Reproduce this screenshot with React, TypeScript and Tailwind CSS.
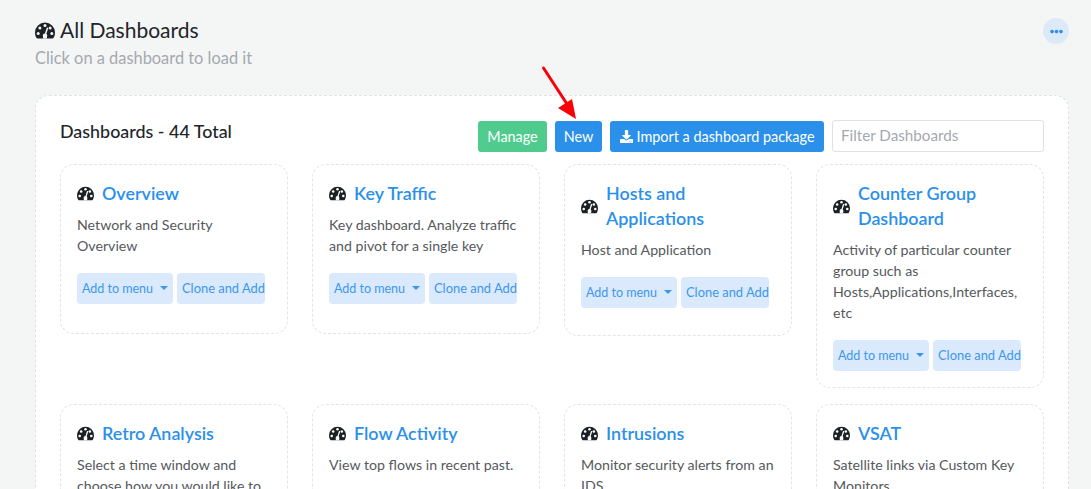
import React from "react";
import { FaDownload, FaEllipsisH } from "react-icons/fa";

function Gauge({ className, hole }: { className: string; hole: string }) {
  return (
    <svg className={className} viewBox="0 0 20 17" aria-hidden="true">
      <path
        d="M10 .5A10 10 0 0 0 0 10.5c0 2.200.6 4 1.400 5.300.300.500.700.700 1.200.700h14.800c.500 0 .900-.200 1.200-.700.800-1.300 1.400-3.100 1.400-5.300A10 10 0 0 0 10 .5z"
        fill="#1d2125"
      />
      <g fill={hole}>
        <circle cx="10" cy="3.600" r="1.500" />
        <circle cx="4.900" cy="6.100" r="1.500" />
        <circle cx="15.100" cy="6.100" r="1.500" />
        <circle cx="3.200" cy="11.400" r="1.500" />
        <circle cx="16.800" cy="11.400" r="1.500" />
        <circle cx="10" cy="13.600" r="2.200" />
        <rect x="8" y="14" width="4" height="2.500" />
      </g>
      <line x1="10.200" y1="13" x2="12.400" y2="6.200" stroke={hole} strokeWidth="1.500" strokeLinecap="round" />
    </svg>
  );
}

const cards = [
  { t: "Overview", d: "Network and Security Overview", pb: "pb-[29px]" },
  { t: "Key Traffic", d: "Key dashboard. Analyze traffic and pivot for a single key", pb: "pb-[29px]" },
  { t: "Hosts and Applications", d: "Host and Application", pb: "pb-[27px]" },
  { t: "Counter Group Dashboard", d: "Activity of particular counter group such as Hosts,Applications,Interfaces, etc", pb: "pb-[16px]" },
  { t: "Retro Analysis", d: "Select a time window and choose how you would like to analyze", pb: "pb-[29px]" },
  { t: "Flow Activity", d: "View top flows in recent past.", pb: "pb-[29px]" },
  { t: "Intrusions", d: "Monitor security alerts from an IDS", pb: "pb-[29px]" },
  { t: "VSAT", d: "Satellite links via Custom Key Monitors", pb: "pb-[29px]" },
];

function Card({ t, d, pb }: { t: string; d: string; pb: string }) {
  return (
    <div className={"self-start rounded-[14px] border border-dashed border-[#e2e4e6] bg-white pl-4 pr-[16px] pt-[16px] " + pb}>
      <div className="flex items-center gap-[8px]">
        <Gauge className="w-[17px] h-[15px] shrink-0" hole="#ffffff" />
        <h3 className="text-[17.9px] leading-[25px] font-semibold text-[#2b90ea]">{t}</h3>
      </div>
      <p className="mt-[8px] text-[14.2px] leading-[21px] text-[#55595d]">{d}</p>
      <div className="mt-[17px] flex gap-[4px] whitespace-nowrap">
        <button className="h-[31px] w-[96px] flex items-center justify-center rounded-[4px] bg-[#dbe9fd] pt-[2px] text-[12.5px] text-[#3a98ec]">
          Add to menu
          <span className="ml-[7px] mb-[4px] border-x-[4.5px] border-t-[4.5px] border-x-transparent border-t-[#3a98ec]" />
        </button>
        <button className="h-[31px] w-[88px] flex items-center rounded-[4px] bg-[#dbe9fd] pl-[5px] pt-[1px] text-[12.9px] text-[#3a98ec]">
          Clone and Add
        </button>
      </div>
    </div>
  );
}

export default function App() {
  return (
    <div
      className="relative h-[489px] overflow-hidden bg-[#f4f6f6] pl-[35px] pr-[22px] pt-[17px]"
      style={{ fontFamily: 'Lato, "Open Sans", sans-serif' }}
    >
      <div className="flex justify-between">
        <div>
          <h1 className="flex items-center gap-[5px] text-[21px] leading-[26px] text-[#212529]">
            <Gauge className="w-[20px] h-[17px]" hole="#f4f6f6" />
            All Dashboards
          </h1>
          <p className="mt-[3px] text-[16.4px] leading-[23px] text-[#a4a9ae]">Click on a dashboard to load it</p>
        </div>
        <div className="mt-[1px] flex h-[26px] w-[26px] items-center justify-center rounded-full bg-[#dbe9f8]">
          <FaEllipsisH className="h-[13px] w-[13px] text-[#2b90ea]" />
        </div>
      </div>
      <div className="mt-[26px] rounded-[14px] border border-dashed border-[#dfe1e3] bg-white pl-[24px] pr-[24px] pt-[24px]">
        <div className="flex items-start justify-between">
          <h2 className="-mt-[1px] text-[17.9px] leading-[24px] font-medium text-[#212529]">Dashboards - 44 Total</h2>
          <div className="flex gap-[8px] text-[14.4px] text-white">
            <button className="mt-[1px] h-[31px] w-[69px] rounded-[3px] bg-[#4fcb8d]">Manage</button>
            <button className="mt-[1px] h-[31px] w-[47px] rounded-[3px] bg-[#2b90ea]">New</button>
            <button className="mt-[1px] h-[31px] w-[214px] flex items-center justify-center gap-[4px] rounded-[3px] bg-[#2b90ea]">
              <FaDownload className="h-[13px] w-[13px]" />
              Import a dashboard package
            </button>
            <input
              placeholder="Filter Dashboards"
              className="h-[32px] w-[212px] rounded-[3px] border border-[#dee0e2] bg-white px-[8px] pb-[2px] text-[15.2px] placeholder:text-[#a4a9ae]"
            />
          </div>
        </div>
        <div className="mt-[12px] grid grid-cols-4 gap-x-[24px] gap-y-[16px]">
          {cards.map((c) => (
            <Card key={c.t} {...c} />
          ))}
        </div>
      </div>
      <svg className="absolute left-[540px] top-[65px]" width="40" height="56" viewBox="0 0 40 56">
        <line x1="3.500" y1="3" x2="27" y2="39" stroke="#fb0007" strokeWidth="3" strokeLinecap="round" />
        <polygon points="36,54 18,43 32,34" fill="#fb0007" />
      </svg>
    </div>
  );
}
